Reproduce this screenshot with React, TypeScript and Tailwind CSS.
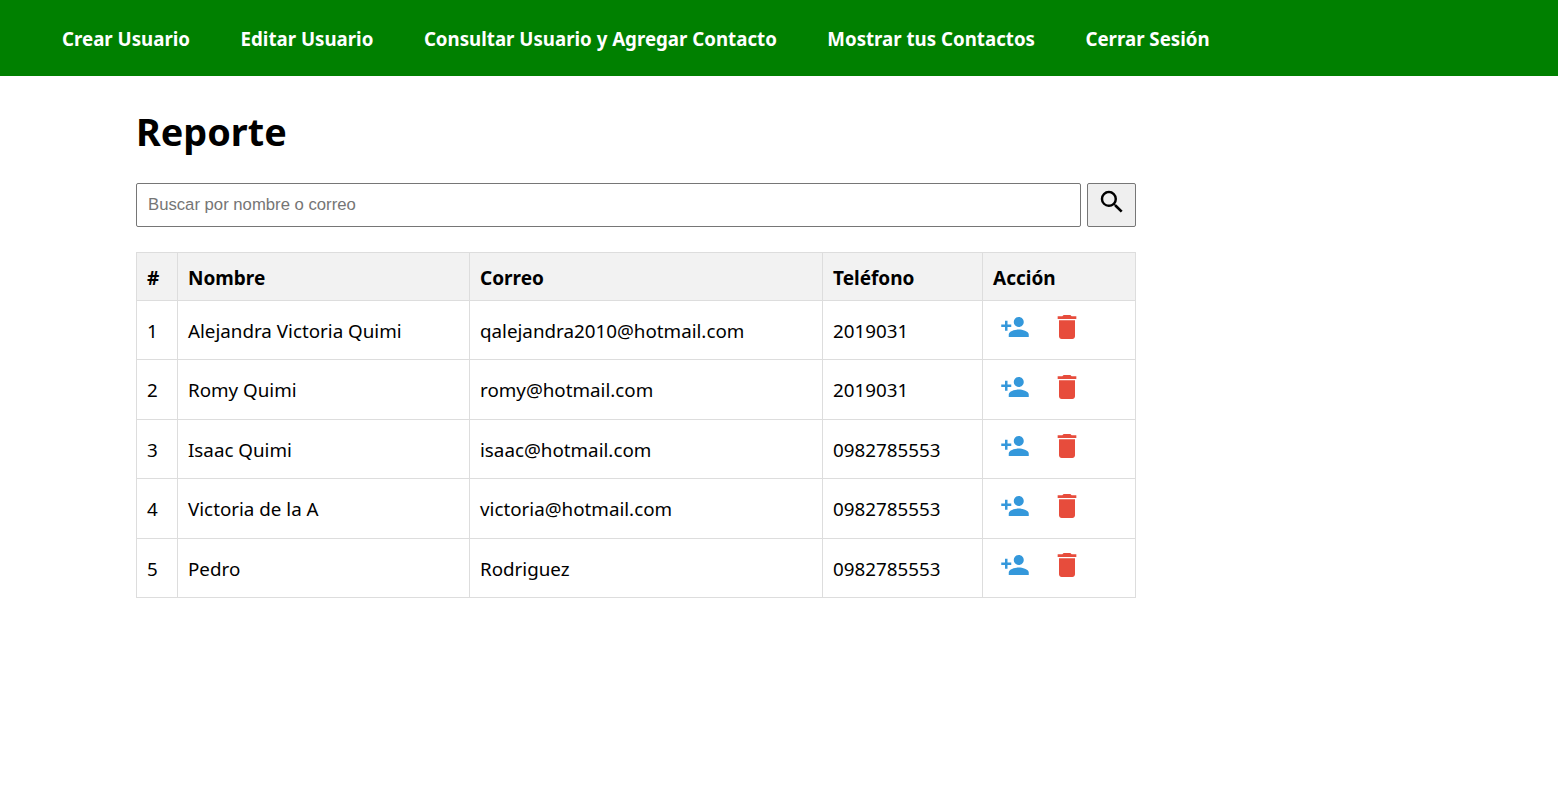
import { MdDelete, MdPersonAdd, MdSearch } from 'react-icons/md'

const navItems = [
  'Crear Usuario',
  'Editar Usuario',
  'Consultar Usuario y Agregar Contacto',
  'Mostrar tus Contactos',
  'Cerrar Sesión',
]

const rows = [
  { id: 1, nombre: 'Alejandra Victoria Quimi', correo: 'qalejandra2010@hotmail.com', telefono: '2019031' },
  { id: 2, nombre: 'Romy Quimi', correo: 'romy@hotmail.com', telefono: '2019031' },
  { id: 3, nombre: 'Isaac Quimi', correo: 'isaac@hotmail.com', telefono: '0982785553' },
  { id: 4, nombre: 'Victoria de la A', correo: 'victoria@hotmail.com', telefono: '0982785553' },
  { id: 5, nombre: 'Pedro', correo: 'Rodriguez', telefono: '0982785553' },
]

const thClass = 'border border-[#dddddd] bg-[#f2f2f2] px-[10px] pt-[3px] text-left font-bold'
const tdClass = 'border border-[#dddddd] px-[10px] pt-[2.5px]'

export default function App() {
  return (
    <div className="min-h-[787px] bg-white font-['Noto_Sans',sans-serif] text-[18.8px] text-black">
      <nav className="flex h-[76px] items-center gap-[50.5px] bg-[#008000] pl-[62px] pt-[2px]">
        {navItems.map((item) => (
          <a key={item} href="#" className="text-[18.7px] font-bold text-white">
            {item}
          </a>
        ))}
      </nav>

      <main className="ml-[136px] w-[1000px]">
        <h1 className="mt-[30px] h-[52px] text-[37.8px] leading-[52px] font-bold">Reporte</h1>

        <form className="mt-[25px] flex gap-[6px]">
          <input
            placeholder="Buscar por nombre o correo"
            className="h-[44px] flex-1 rounded-[2px] border border-[#767676] px-[11px] font-['Liberation_Sans',sans-serif] text-[16.7px] placeholder:text-[#757575]"
          />
          <button type="button" className="flex h-[44px] w-[49px] items-center justify-center rounded-[2px] border border-[#767676] bg-[#efefef] pb-[6px]">
            <MdSearch size={30} />
          </button>
        </form>

        <table className="mt-[25px] w-[999px] table-fixed border-collapse">
          <thead>
            <tr className="h-[47.5px]">
              <th className={`${thClass} w-[41px] text-[19px]`}>#</th>
              <th className={`${thClass} w-[292px] text-[19px]`}>Nombre</th>
              <th className={`${thClass} w-[353px] text-[19px]`}>Correo</th>
              <th className={`${thClass} w-[160px] text-[19px]`}>Teléfono</th>
              <th className={`${thClass} w-[153px] text-[19px]`}>Acción</th>
            </tr>
          </thead>
          <tbody>
            {rows.map((row) => (
              <tr key={row.id} className="h-[59.5px]">
                <td className={tdClass}>{row.id}</td>
                <td className={tdClass}>{row.nombre}</td>
                <td className={tdClass}>{row.correo}</td>
                <td className={tdClass}>{row.telefono}</td>
                <td className={tdClass}>
                  <div className="flex items-center pb-[8px] pl-[7px]">
                    <MdPersonAdd size={30} className="text-[#3498db]" />
                    <MdDelete size={32} className="ml-[21px] text-[#e74c3c]" />
                  </div>
                </td>
              </tr>
            ))}
          </tbody>
        </table>
      </main>
    </div>
  )
}
